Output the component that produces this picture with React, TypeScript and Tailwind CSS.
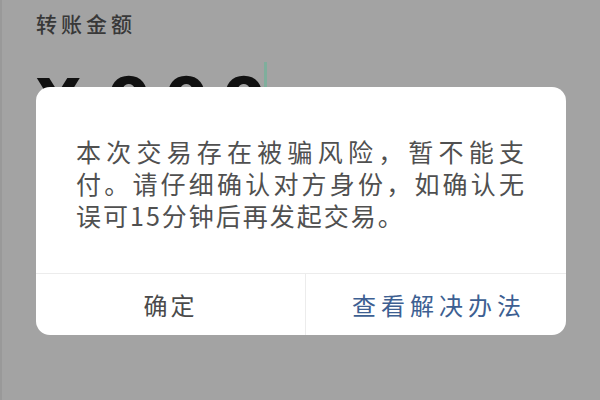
import React from "react";

const cjk = { fontFamily: '"Noto Sans CJK SC", "Noto Sans", sans-serif' };

export default function App() {
  return (
    <div className="relative w-[600px] h-[400px] overflow-hidden bg-[#a3a3a3] border-l-[2px] border-[#999999]" style={cjk}>
      <div className="pl-[34px] pt-[9px]">
        <div className="text-[21px] leading-[28px] tracking-[4px] font-medium text-[#383838]">转账金额</div>
        <div className="mt-[32px] flex items-start">
          <div
            className="flex text-[64px] font-bold leading-[64px] text-[#111111]"
            style={{ fontFamily: '"DejaVu Sans", sans-serif' }}
          >
            <span className="mt-[2px]">¥</span>
            <span className="ml-[26px] tracking-[13px]">000</span>
          </div>
          <div className="ml-[-15px] mt-[-7px] w-[3px] h-[40px] bg-[#7fae9c]" />
        </div>
      </div>

      <div className="absolute left-[34px] top-[87px] w-[530px] h-[248px] bg-white rounded-[14px] flex flex-col overflow-hidden">
        <div className="flex-1 px-[40px] pt-[48px]">
          <p className="text-[25px] leading-[32px] tracking-[2px] text-[#505050] text-justify">
            本次交易存在被骗风险，暂不能支付。请仔细确认对方身份，如确认无误可15分钟后再发起交易。
          </p>
        </div>
        <div className="h-[62px] flex border-t border-[#ececec]">
          <div className="w-[270px] flex items-center justify-center text-[24px] tracking-[3px] text-[#4a4a4a] border-r border-[#ececec]">
            确定
          </div>
          <div className="flex-1 flex items-center justify-center pl-[6px] text-[24px] tracking-[5px] text-[#3d5f92]">
            查看解决办法
          </div>
        </div>
      </div>
    </div>
  );
}
